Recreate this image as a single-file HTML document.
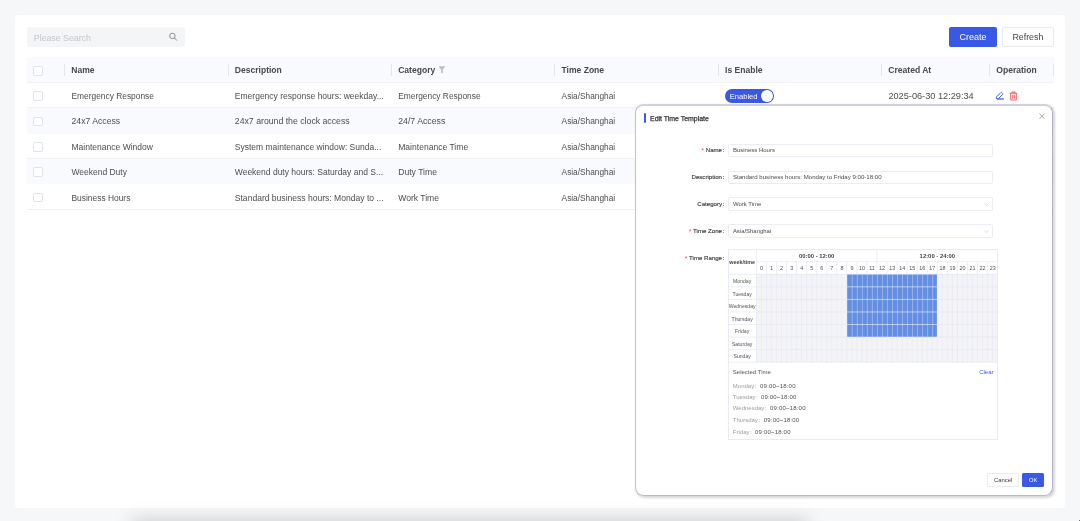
<!DOCTYPE html>
<html><head><meta charset="utf-8"><style>
*{box-sizing:border-box;margin:0;padding:0}
html,body{will-change:transform;width:1080px;height:521px;overflow:hidden;background:#f6f7f9;font-family:"Liberation Sans",sans-serif;position:relative}
.abs{position:absolute}
.t{position:absolute;white-space:nowrap;line-height:normal}
.card{left:15.2px;top:15.2px;width:1050.2px;height:492.8px;background:#fff;border-radius:4px}
.search{left:26.7px;top:26.9px;width:158.6px;height:20px;background:#f4f5f7;border-radius:2px}
.btn{height:20px;border-radius:2px}
.create{left:949.1px;top:26.6px;width:47.9px;height:20.4px;background:#3958e5}
.refresh{left:1002.2px;top:26.6px;width:51.4px;height:20.4px;background:#fff;border:1px solid #e9ebef}
.thead{left:27px;top:57px;width:1026.7px;height:25.5px;background:#f9fafd;border-bottom:1px solid #f0f1f4}
.sep{position:absolute;top:63.7px;width:1px;height:12px;background:#e4e6ec}
.row{position:absolute;left:27px;width:1027px;border-bottom:1px solid #f0f1f4}
.row.alt{background:#f9fafd;border-bottom:none}
.cb{position:absolute;left:33.4px;width:9.9px;height:9.9px;border:1px solid #e0e2e8;border-radius:2px;background:#fff}
.modal{position:absolute;left:634.8px;top:103.9px;width:418.4px;height:392.1px;background:#fff;border:1.3px solid #c2c4d3;border-top:2px solid #d0d2db;border-right-color:#b3b5c7;border-bottom-color:#b8bacb;border-radius:8.5px;box-shadow:1.5px 1.5px 2.5px rgba(0,0,0,.16)}
.mbar{position:absolute;left:643.8px;top:113px;width:2.1px;height:10px;background:#3d5af1;border-radius:1px}
.finp{position:absolute;left:727.6px;width:265.8px;height:13.4px;border:0.8px solid #ebedf2;border-radius:1.5px;background:#fff}
.lab{color:#3a3a3a;-webkit-text-stroke:0.14px #3a3a3a}
.tc{position:absolute;text-align:center;white-space:nowrap}
.mbtn{position:absolute;top:473.1px;height:13.6px;border-radius:1.5px}
.cancel{left:987.2px;width:31.6px;border:0.8px solid #eaecf0;background:#fff}
.ok{left:1022.2px;width:21.8px;background:#3958e5}
</style></head><body>
<div class="abs card"></div>
<div class="abs search"></div>
<div class="t " style="left:33.70px;top:32.54px;font-size:8.8px;color:#c3c6cc;">Please Search</div>
<svg class="abs" style="left:168px;top:32px" width="10" height="10" viewBox="0 0 10 10"><circle cx="4.4" cy="3.9" r="2.7" fill="none" stroke="#777a82" stroke-width="0.85"/><line x1="6.4" y1="5.9" x2="8.9" y2="8.5" stroke="#777a82" stroke-width="0.95"/></svg>
<div class="abs btn create"></div>
<div class="abs btn refresh"></div>
<div class="t " style="left:959.60px;top:31.86px;font-size:9px;color:#fff;">Create</div>
<div class="t " style="left:1012.40px;top:31.99px;font-size:8.85px;color:#444;">Refresh</div>
<div class="abs thead"></div>
<div class="cb" style="top:66px"></div>
<div class="sep" style="left:63.900000000000006px"></div>
<div class="sep" style="left:227.8px"></div>
<div class="sep" style="left:391.2px"></div>
<div class="sep" style="left:554.3px"></div>
<div class="sep" style="left:717.8px"></div>
<div class="sep" style="left:881.2px"></div>
<div class="sep" style="left:989.0px"></div>
<div class="sep" style="left:1052.7px"></div>
<div class="t " style="left:71.30px;top:65.26px;font-size:8.55px;color:#484848;font-weight:bold;">Name</div>
<div class="t " style="left:234.80px;top:65.26px;font-size:8.55px;color:#484848;font-weight:bold;">Description</div>
<div class="t " style="left:398.20px;top:65.26px;font-size:8.55px;color:#484848;font-weight:bold;">Category</div>
<div class="t " style="left:561.50px;top:65.26px;font-size:8.55px;color:#484848;font-weight:bold;">Time Zone</div>
<div class="t " style="left:725.10px;top:65.26px;font-size:8.55px;color:#484848;font-weight:bold;">Is Enable</div>
<div class="t " style="left:888.30px;top:65.26px;font-size:8.55px;color:#484848;font-weight:bold;">Created At</div>
<div class="t " style="left:996.30px;top:65.26px;font-size:8.55px;color:#484848;font-weight:bold;">Operation</div>
<svg class="abs" style="left:438px;top:66px" width="8" height="8" viewBox="0 0 8 8"><path d="M0.5 0.3H7.4L4.8 3.4V7.5L3.1 6.6V3.4Z" fill="#b9bcc5"/></svg>
<div class="row" style="top:82.5px;height:25.299999999999997px"></div>
<div class="row alt" style="top:107.8px;height:25.799999999999997px"></div>
<div class="row" style="top:133.6px;height:25.5px"></div>
<div class="row alt" style="top:159.1px;height:25.200000000000017px"></div>
<div class="row" style="top:184.3px;height:25.599999999999994px"></div>
<div class="cb" style="top:91.2px"></div>
<div class="cb" style="top:116.6px"></div>
<div class="cb" style="top:141.9px"></div>
<div class="cb" style="top:167.3px"></div>
<div class="cb" style="top:192.6px"></div>
<div class="t " style="left:71.50px;top:91.40px;font-size:8.4px;color:#4d4d4d;">Emergency Response</div>
<div class="t " style="left:234.80px;top:91.29px;font-size:8.52px;color:#4d4d4d;">Emergency response hours: weekday...</div>
<div class="t " style="left:398.20px;top:91.40px;font-size:8.4px;color:#4d4d4d;">Emergency Response</div>
<div class="t " style="left:561.60px;top:91.49px;font-size:8.3px;color:#4d4d4d;">Asia/Shanghai</div>
<div class="t " style="left:71.50px;top:116.16px;font-size:8.66px;color:#4d4d4d;">24x7 Access</div>
<div class="t " style="left:234.80px;top:116.11px;font-size:8.72px;color:#4d4d4d;">24x7 around the clock access</div>
<div class="t " style="left:398.20px;top:116.09px;font-size:8.74px;color:#4d4d4d;">24/7 Access</div>
<div class="t " style="left:561.60px;top:116.49px;font-size:8.3px;color:#4d4d4d;">Asia/Shanghai</div>
<div class="t " style="left:71.50px;top:141.78px;font-size:8.53px;color:#4d4d4d;">Maintenance Window</div>
<div class="t " style="left:234.80px;top:141.81px;font-size:8.5px;color:#4d4d4d;">System maintenance window: Sunda...</div>
<div class="t " style="left:398.20px;top:141.74px;font-size:8.57px;color:#4d4d4d;">Maintenance Time</div>
<div class="t " style="left:561.60px;top:141.99px;font-size:8.3px;color:#4d4d4d;">Asia/Shanghai</div>
<div class="t " style="left:71.50px;top:167.33px;font-size:8.47px;color:#4d4d4d;">Weekend Duty</div>
<div class="t " style="left:234.80px;top:167.31px;font-size:8.5px;color:#4d4d4d;">Weekend duty hours: Saturday and S...</div>
<div class="t " style="left:398.20px;top:167.18px;font-size:8.64px;color:#4d4d4d;">Duty Time</div>
<div class="t " style="left:561.60px;top:167.49px;font-size:8.3px;color:#4d4d4d;">Asia/Shanghai</div>
<div class="t " style="left:71.50px;top:192.89px;font-size:8.41px;color:#4d4d4d;">Business Hours</div>
<div class="t " style="left:234.80px;top:192.76px;font-size:8.55px;color:#4d4d4d;">Standard business hours: Monday to ...</div>
<div class="t " style="left:398.20px;top:192.73px;font-size:8.59px;color:#4d4d4d;">Work Time</div>
<div class="t " style="left:561.60px;top:192.99px;font-size:8.3px;color:#4d4d4d;">Asia/Shanghai</div>
<div class="t " style="left:888.40px;top:90.87px;font-size:9.2px;color:#4d4d4d;">2025-06-30 12:29:34</div>
<div class="abs" style="left:724.6px;top:88.9px;width:49.2px;height:14px;border-radius:7px;background:#3958e5"></div>
<div class="t " style="left:729.70px;top:92.12px;font-size:7.6px;color:#fff;">Enabled</div>
<div class="abs" style="left:761.2px;top:90px;width:11.8px;height:11.8px;border-radius:50%;background:#fff"></div>
<svg class="abs" style="left:995px;top:91px" width="10" height="10" viewBox="0 0 10 10"><path d="M1.4 6.0L5.9 1.5Q6.3 1.1 6.7 1.5L7.7 2.5Q8.1 2.9 7.7 3.3L3.2 7.8H1.4Z" fill="none" stroke="#4162e8" stroke-width="1" stroke-linejoin="round"/><line x1="2.2" y1="8.0" x2="8.9" y2="8.0" stroke="#4162e8" stroke-width="1.3"/></svg>
<svg class="abs" style="left:1009px;top:91px" width="10" height="10" viewBox="0 0 10 10"><path d="M0.7 2.3H8.3M3.1 2.3V1H5.9V2.3M1.7 2.8V8.6Q1.7 9 2.1 9H6.9Q7.3 9 7.3 8.6V2.8M3.7 3.8V7.8M5.3 3.8V7.8" fill="none" stroke="#ee6464" stroke-width="1.05"/></svg>
<div class="abs" style="left:132px;top:520px;width:676px;height:40px;background:rgba(0,0,0,.17);filter:blur(9px)"></div>
<div class="modal"></div>
<div class="mbar"></div>
<div class="t " style="left:650.00px;top:115.11px;font-size:6.95px;color:#333;-webkit-text-stroke:0.25px #333;">Edit Time Template</div>
<svg class="abs" style="left:1038.5px;top:112.5px" width="6.5" height="6.5" viewBox="0 0 6.5 6.5"><path d="M0.5 0.6L5.4 5.9M5.4 0.6L0.5 5.9" stroke="#8a8d94" stroke-width="0.75" fill="none"/></svg>
<div class="finp" style="top:143.5px"></div>
<div class="t lab" style="right:355.70000000000005px;top:146.38px;font-size:6.1px"><span style=color:#f25555;font-size:7px;line-height:0;-webkit-text-stroke:0;position:relative;top:0.9px>*</span> Name<span style="margin-left:0.6px">:</span></div>
<div class="t " style="left:732.90px;top:147.27px;font-size:6px;color:#4a4a4a;">Business Hours</div>
<div class="finp" style="top:170.5px"></div>
<div class="t lab" style="right:355.70000000000005px;top:173.38px;font-size:6.1px">Description<span style="margin-left:0.6px">:</span></div>
<div class="t " style="left:732.90px;top:172.98px;font-size:6.1px;color:#4a4a4a;">Standard business hours: Monday to Friday 9:00-18:00</div>
<div class="finp" style="top:197.4px"></div>
<div class="t lab" style="right:355.70000000000005px;top:200.28px;font-size:6.1px">Category<span style="margin-left:0.6px">:</span></div>
<div class="t " style="left:732.90px;top:201.17px;font-size:6px;color:#4a4a4a;">Work Time</div>
<svg class="abs" style="left:983.5px;top:202.6px" width="5" height="3" viewBox="0 0 5 3"><path d="M0.3 0.3L2.5 2.5L4.7 0.3" stroke="#c4c7cd" stroke-width="0.6" fill="none"/></svg>
<div class="finp" style="top:224.3px"></div>
<div class="t lab" style="right:355.70000000000005px;top:227.18px;font-size:6.1px"><span style=color:#f25555;font-size:7px;line-height:0;-webkit-text-stroke:0;position:relative;top:0.9px>*</span> Time Zone<span style="margin-left:0.6px">:</span></div>
<div class="t " style="left:732.90px;top:228.12px;font-size:5.95px;color:#4a4a4a;">Asia/Shanghai</div>
<svg class="abs" style="left:983.5px;top:229.5px" width="5" height="3" viewBox="0 0 5 3"><path d="M0.3 0.3L2.5 2.5L4.7 0.3" stroke="#c4c7cd" stroke-width="0.6" fill="none"/></svg>
<div class="t lab" style="right:355.70000000000005px;top:254.28px;font-size:6.1px"><span style="color:#f25555;font-size:7px;line-height:0;-webkit-text-stroke:0;position:relative;top:0.9px">*</span> Time Range<span style="margin-left:0.6px">:</span></div>
<div class="abs" style="left:727.9px;top:249.4px;width:269.70000000000005px;height:190.29999999999998px;border:1px solid #e8eaf5;background:#fff"></div>
<div class="abs" style="left:756.4px;top:274.3px;width:240.20000000000005px;height:87.89999999999998px;background:#f4f4f6"></div>
<div class="abs" style="left:846.85px;top:274.3px;width:90.45000000000002px;height:62.78571428571426px;background:#648ee2"></div>
<svg class="abs" style="left:0;top:0" width="1080" height="521" viewBox="0 0 1080 521"><line x1="756.4" y1="261.7" x2="997.6" y2="261.7" stroke="#e3e6f5" stroke-width="0.7"/><line x1="727.9" y1="274.3" x2="997.6" y2="274.3" stroke="#e3e6f5" stroke-width="0.7"/><line x1="727.9" y1="286.8571428571429" x2="997.6" y2="286.8571428571429" stroke="#e3e6f5" stroke-width="0.7"/><line x1="727.9" y1="299.4142857142857" x2="997.6" y2="299.4142857142857" stroke="#e3e6f5" stroke-width="0.7"/><line x1="727.9" y1="311.9714285714286" x2="997.6" y2="311.9714285714286" stroke="#e3e6f5" stroke-width="0.7"/><line x1="727.9" y1="324.5285714285714" x2="997.6" y2="324.5285714285714" stroke="#e3e6f5" stroke-width="0.7"/><line x1="727.9" y1="337.0857142857143" x2="997.6" y2="337.0857142857143" stroke="#e3e6f5" stroke-width="0.7"/><line x1="727.9" y1="349.6428571428571" x2="997.6" y2="349.6428571428571" stroke="#e3e6f5" stroke-width="0.7"/><line x1="727.9" y1="362.2" x2="997.6" y2="362.2" stroke="#e3e6f5" stroke-width="0.7"/><line x1="756.4" y1="249.4" x2="756.4" y2="362.2" stroke="#e3e6f5" stroke-width="0.7"/><line x1="877.0" y1="249.4" x2="877.0" y2="261.7" stroke="#e3e6f5" stroke-width="0.7"/><line x1="766.4499999999999" y1="261.7" x2="766.4499999999999" y2="274.3" stroke="#e3e6f5" stroke-width="0.7"/><line x1="776.5" y1="261.7" x2="776.5" y2="274.3" stroke="#e3e6f5" stroke-width="0.7"/><line x1="786.55" y1="261.7" x2="786.55" y2="274.3" stroke="#e3e6f5" stroke-width="0.7"/><line x1="796.6" y1="261.7" x2="796.6" y2="274.3" stroke="#e3e6f5" stroke-width="0.7"/><line x1="806.65" y1="261.7" x2="806.65" y2="274.3" stroke="#e3e6f5" stroke-width="0.7"/><line x1="816.7" y1="261.7" x2="816.7" y2="274.3" stroke="#e3e6f5" stroke-width="0.7"/><line x1="826.75" y1="261.7" x2="826.75" y2="274.3" stroke="#e3e6f5" stroke-width="0.7"/><line x1="836.8" y1="261.7" x2="836.8" y2="274.3" stroke="#e3e6f5" stroke-width="0.7"/><line x1="846.85" y1="261.7" x2="846.85" y2="274.3" stroke="#e3e6f5" stroke-width="0.7"/><line x1="856.9" y1="261.7" x2="856.9" y2="274.3" stroke="#e3e6f5" stroke-width="0.7"/><line x1="866.95" y1="261.7" x2="866.95" y2="274.3" stroke="#e3e6f5" stroke-width="0.7"/><line x1="877.0" y1="261.7" x2="877.0" y2="274.3" stroke="#e3e6f5" stroke-width="0.7"/><line x1="887.05" y1="261.7" x2="887.05" y2="274.3" stroke="#e3e6f5" stroke-width="0.7"/><line x1="897.1" y1="261.7" x2="897.1" y2="274.3" stroke="#e3e6f5" stroke-width="0.7"/><line x1="907.15" y1="261.7" x2="907.15" y2="274.3" stroke="#e3e6f5" stroke-width="0.7"/><line x1="917.2" y1="261.7" x2="917.2" y2="274.3" stroke="#e3e6f5" stroke-width="0.7"/><line x1="927.25" y1="261.7" x2="927.25" y2="274.3" stroke="#e3e6f5" stroke-width="0.7"/><line x1="937.3" y1="261.7" x2="937.3" y2="274.3" stroke="#e3e6f5" stroke-width="0.7"/><line x1="947.35" y1="261.7" x2="947.35" y2="274.3" stroke="#e3e6f5" stroke-width="0.7"/><line x1="957.4000000000001" y1="261.7" x2="957.4000000000001" y2="274.3" stroke="#e3e6f5" stroke-width="0.7"/><line x1="967.45" y1="261.7" x2="967.45" y2="274.3" stroke="#e3e6f5" stroke-width="0.7"/><line x1="977.5" y1="261.7" x2="977.5" y2="274.3" stroke="#e3e6f5" stroke-width="0.7"/><line x1="987.5500000000001" y1="261.7" x2="987.5500000000001" y2="274.3" stroke="#e3e6f5" stroke-width="0.7"/><line x1="761.425" y1="274.3" x2="761.425" y2="362.2" stroke="#e3e6f5" stroke-width="0.55"/><line x1="766.4499999999999" y1="274.3" x2="766.4499999999999" y2="362.2" stroke="#e3e6f5" stroke-width="0.55"/><line x1="771.475" y1="274.3" x2="771.475" y2="362.2" stroke="#e3e6f5" stroke-width="0.55"/><line x1="776.5" y1="274.3" x2="776.5" y2="362.2" stroke="#e3e6f5" stroke-width="0.55"/><line x1="781.525" y1="274.3" x2="781.525" y2="362.2" stroke="#e3e6f5" stroke-width="0.55"/><line x1="786.55" y1="274.3" x2="786.55" y2="362.2" stroke="#e3e6f5" stroke-width="0.55"/><line x1="791.575" y1="274.3" x2="791.575" y2="362.2" stroke="#e3e6f5" stroke-width="0.55"/><line x1="796.6" y1="274.3" x2="796.6" y2="362.2" stroke="#e3e6f5" stroke-width="0.55"/><line x1="801.625" y1="274.3" x2="801.625" y2="362.2" stroke="#e3e6f5" stroke-width="0.55"/><line x1="806.65" y1="274.3" x2="806.65" y2="362.2" stroke="#e3e6f5" stroke-width="0.55"/><line x1="811.675" y1="274.3" x2="811.675" y2="362.2" stroke="#e3e6f5" stroke-width="0.55"/><line x1="816.7" y1="274.3" x2="816.7" y2="362.2" stroke="#e3e6f5" stroke-width="0.55"/><line x1="821.725" y1="274.3" x2="821.725" y2="362.2" stroke="#e3e6f5" stroke-width="0.55"/><line x1="826.75" y1="274.3" x2="826.75" y2="362.2" stroke="#e3e6f5" stroke-width="0.55"/><line x1="831.775" y1="274.3" x2="831.775" y2="362.2" stroke="#e3e6f5" stroke-width="0.55"/><line x1="836.8" y1="274.3" x2="836.8" y2="362.2" stroke="#e3e6f5" stroke-width="0.55"/><line x1="841.825" y1="274.3" x2="841.825" y2="362.2" stroke="#e3e6f5" stroke-width="0.55"/><line x1="846.85" y1="274.3" x2="846.85" y2="362.2" stroke="#e3e6f5" stroke-width="0.55"/><line x1="851.875" y1="337.0857142857143" x2="851.875" y2="362.2" stroke="#e3e6f5" stroke-width="0.55"/><line x1="852.275" y1="274.3" x2="852.275" y2="337.0857142857143" stroke="#fff" stroke-opacity="0.45" stroke-width="0.7"/><line x1="856.9" y1="337.0857142857143" x2="856.9" y2="362.2" stroke="#e3e6f5" stroke-width="0.55"/><line x1="857.3" y1="274.3" x2="857.3" y2="337.0857142857143" stroke="#fff" stroke-opacity="0.45" stroke-width="0.7"/><line x1="861.925" y1="337.0857142857143" x2="861.925" y2="362.2" stroke="#e3e6f5" stroke-width="0.55"/><line x1="862.3249999999999" y1="274.3" x2="862.3249999999999" y2="337.0857142857143" stroke="#fff" stroke-opacity="0.45" stroke-width="0.7"/><line x1="866.95" y1="337.0857142857143" x2="866.95" y2="362.2" stroke="#e3e6f5" stroke-width="0.55"/><line x1="867.35" y1="274.3" x2="867.35" y2="337.0857142857143" stroke="#fff" stroke-opacity="0.45" stroke-width="0.7"/><line x1="871.975" y1="337.0857142857143" x2="871.975" y2="362.2" stroke="#e3e6f5" stroke-width="0.55"/><line x1="872.375" y1="274.3" x2="872.375" y2="337.0857142857143" stroke="#fff" stroke-opacity="0.45" stroke-width="0.7"/><line x1="877.0" y1="337.0857142857143" x2="877.0" y2="362.2" stroke="#e3e6f5" stroke-width="0.55"/><line x1="877.4" y1="274.3" x2="877.4" y2="337.0857142857143" stroke="#fff" stroke-opacity="0.45" stroke-width="0.7"/><line x1="882.025" y1="337.0857142857143" x2="882.025" y2="362.2" stroke="#e3e6f5" stroke-width="0.55"/><line x1="882.425" y1="274.3" x2="882.425" y2="337.0857142857143" stroke="#fff" stroke-opacity="0.45" stroke-width="0.7"/><line x1="887.05" y1="337.0857142857143" x2="887.05" y2="362.2" stroke="#e3e6f5" stroke-width="0.55"/><line x1="887.4499999999999" y1="274.3" x2="887.4499999999999" y2="337.0857142857143" stroke="#fff" stroke-opacity="0.45" stroke-width="0.7"/><line x1="892.075" y1="337.0857142857143" x2="892.075" y2="362.2" stroke="#e3e6f5" stroke-width="0.55"/><line x1="892.475" y1="274.3" x2="892.475" y2="337.0857142857143" stroke="#fff" stroke-opacity="0.45" stroke-width="0.7"/><line x1="897.1" y1="337.0857142857143" x2="897.1" y2="362.2" stroke="#e3e6f5" stroke-width="0.55"/><line x1="897.5" y1="274.3" x2="897.5" y2="337.0857142857143" stroke="#fff" stroke-opacity="0.45" stroke-width="0.7"/><line x1="902.125" y1="337.0857142857143" x2="902.125" y2="362.2" stroke="#e3e6f5" stroke-width="0.55"/><line x1="902.525" y1="274.3" x2="902.525" y2="337.0857142857143" stroke="#fff" stroke-opacity="0.45" stroke-width="0.7"/><line x1="907.15" y1="337.0857142857143" x2="907.15" y2="362.2" stroke="#e3e6f5" stroke-width="0.55"/><line x1="907.55" y1="274.3" x2="907.55" y2="337.0857142857143" stroke="#fff" stroke-opacity="0.45" stroke-width="0.7"/><line x1="912.175" y1="337.0857142857143" x2="912.175" y2="362.2" stroke="#e3e6f5" stroke-width="0.55"/><line x1="912.5749999999999" y1="274.3" x2="912.5749999999999" y2="337.0857142857143" stroke="#fff" stroke-opacity="0.45" stroke-width="0.7"/><line x1="917.2" y1="337.0857142857143" x2="917.2" y2="362.2" stroke="#e3e6f5" stroke-width="0.55"/><line x1="917.6" y1="274.3" x2="917.6" y2="337.0857142857143" stroke="#fff" stroke-opacity="0.45" stroke-width="0.7"/><line x1="922.225" y1="337.0857142857143" x2="922.225" y2="362.2" stroke="#e3e6f5" stroke-width="0.55"/><line x1="922.625" y1="274.3" x2="922.625" y2="337.0857142857143" stroke="#fff" stroke-opacity="0.45" stroke-width="0.7"/><line x1="927.25" y1="337.0857142857143" x2="927.25" y2="362.2" stroke="#e3e6f5" stroke-width="0.55"/><line x1="927.65" y1="274.3" x2="927.65" y2="337.0857142857143" stroke="#fff" stroke-opacity="0.45" stroke-width="0.7"/><line x1="932.2750000000001" y1="337.0857142857143" x2="932.2750000000001" y2="362.2" stroke="#e3e6f5" stroke-width="0.55"/><line x1="932.6750000000001" y1="274.3" x2="932.6750000000001" y2="337.0857142857143" stroke="#fff" stroke-opacity="0.45" stroke-width="0.7"/><line x1="937.3" y1="274.3" x2="937.3" y2="362.2" stroke="#e3e6f5" stroke-width="0.55"/><line x1="942.325" y1="274.3" x2="942.325" y2="362.2" stroke="#e3e6f5" stroke-width="0.55"/><line x1="947.35" y1="274.3" x2="947.35" y2="362.2" stroke="#e3e6f5" stroke-width="0.55"/><line x1="952.375" y1="274.3" x2="952.375" y2="362.2" stroke="#e3e6f5" stroke-width="0.55"/><line x1="957.4000000000001" y1="274.3" x2="957.4000000000001" y2="362.2" stroke="#e3e6f5" stroke-width="0.55"/><line x1="962.4250000000001" y1="274.3" x2="962.4250000000001" y2="362.2" stroke="#e3e6f5" stroke-width="0.55"/><line x1="967.45" y1="274.3" x2="967.45" y2="362.2" stroke="#e3e6f5" stroke-width="0.55"/><line x1="972.475" y1="274.3" x2="972.475" y2="362.2" stroke="#e3e6f5" stroke-width="0.55"/><line x1="977.5" y1="274.3" x2="977.5" y2="362.2" stroke="#e3e6f5" stroke-width="0.55"/><line x1="982.5250000000001" y1="274.3" x2="982.5250000000001" y2="362.2" stroke="#e3e6f5" stroke-width="0.55"/><line x1="987.5500000000001" y1="274.3" x2="987.5500000000001" y2="362.2" stroke="#e3e6f5" stroke-width="0.55"/><line x1="992.575" y1="274.3" x2="992.575" y2="362.2" stroke="#e3e6f5" stroke-width="0.55"/></svg>
<div class="tc" style="left:727.90px;width:28.50px;top:259.01px;font-size:5.4px;color:#444;font-weight:bold;">week/time</div>
<div class="tc" style="left:756.40px;width:120.60px;top:252.66px;font-size:5.9px;color:#444;font-weight:bold;">00:00 - 12:00</div>
<div class="tc" style="left:877.00px;width:120.60px;top:252.66px;font-size:5.9px;color:#444;font-weight:bold;">12:00 - 24:00</div>
<div class="tc" style="left:756.50px;width:10.05px;top:265.11px;font-size:5.4px;color:#505050;">0</div>
<div class="tc" style="left:766.55px;width:10.05px;top:265.11px;font-size:5.4px;color:#505050;">1</div>
<div class="tc" style="left:776.60px;width:10.05px;top:265.11px;font-size:5.4px;color:#505050;">2</div>
<div class="tc" style="left:786.65px;width:10.05px;top:265.11px;font-size:5.4px;color:#505050;">3</div>
<div class="tc" style="left:796.70px;width:10.05px;top:265.11px;font-size:5.4px;color:#505050;">4</div>
<div class="tc" style="left:806.75px;width:10.05px;top:265.11px;font-size:5.4px;color:#505050;">5</div>
<div class="tc" style="left:816.80px;width:10.05px;top:265.11px;font-size:5.4px;color:#505050;">6</div>
<div class="tc" style="left:826.85px;width:10.05px;top:265.11px;font-size:5.4px;color:#505050;">7</div>
<div class="tc" style="left:836.90px;width:10.05px;top:265.11px;font-size:5.4px;color:#505050;">8</div>
<div class="tc" style="left:846.95px;width:10.05px;top:265.11px;font-size:5.4px;color:#505050;">9</div>
<div class="tc" style="left:857.00px;width:10.05px;top:265.11px;font-size:5.4px;color:#505050;">10</div>
<div class="tc" style="left:867.05px;width:10.05px;top:265.11px;font-size:5.4px;color:#505050;">11</div>
<div class="tc" style="left:877.10px;width:10.05px;top:265.11px;font-size:5.4px;color:#505050;">12</div>
<div class="tc" style="left:887.15px;width:10.05px;top:265.11px;font-size:5.4px;color:#505050;">13</div>
<div class="tc" style="left:897.20px;width:10.05px;top:265.11px;font-size:5.4px;color:#505050;">14</div>
<div class="tc" style="left:907.25px;width:10.05px;top:265.11px;font-size:5.4px;color:#505050;">15</div>
<div class="tc" style="left:917.30px;width:10.05px;top:265.11px;font-size:5.4px;color:#505050;">16</div>
<div class="tc" style="left:927.35px;width:10.05px;top:265.11px;font-size:5.4px;color:#505050;">17</div>
<div class="tc" style="left:937.40px;width:10.05px;top:265.11px;font-size:5.4px;color:#505050;">18</div>
<div class="tc" style="left:947.45px;width:10.05px;top:265.11px;font-size:5.4px;color:#505050;">19</div>
<div class="tc" style="left:957.50px;width:10.05px;top:265.11px;font-size:5.4px;color:#505050;">20</div>
<div class="tc" style="left:967.55px;width:10.05px;top:265.11px;font-size:5.4px;color:#505050;">21</div>
<div class="tc" style="left:977.60px;width:10.05px;top:265.11px;font-size:5.4px;color:#505050;">22</div>
<div class="tc" style="left:987.65px;width:10.05px;top:265.11px;font-size:5.4px;color:#505050;">23</div>
<div class="tc" style="left:727.90px;width:28.50px;top:277.98px;font-size:5.1px;color:#555;">Monday</div>
<div class="tc" style="left:727.90px;width:28.50px;top:290.54px;font-size:5.1px;color:#555;">Tuesday</div>
<div class="tc" style="left:727.90px;width:28.50px;top:303.10px;font-size:5.1px;color:#555;">Wednesday</div>
<div class="tc" style="left:727.90px;width:28.50px;top:315.66px;font-size:5.1px;color:#555;">Thursday</div>
<div class="tc" style="left:727.90px;width:28.50px;top:328.21px;font-size:5.1px;color:#555;">Friday</div>
<div class="tc" style="left:727.90px;width:28.50px;top:340.77px;font-size:5.1px;color:#555;">Saturday</div>
<div class="tc" style="left:727.90px;width:28.50px;top:353.33px;font-size:5.1px;color:#555;">Sunday</div>
<div class="t " style="left:732.80px;top:368.97px;font-size:6px;color:#555;">Selected Time</div>
<div class="t " style="left:979.20px;top:368.97px;font-size:6px;color:#3d5af1;">Clear</div>
<div class="t " style="left:732.80px;top:382.77px;font-size:6px;color:#505050;"><span style="color:#9c9c9c">Monday<span style="margin-left:0.7px">:</span></span><span style="position:absolute;left:27.30px;letter-spacing:0.185px">09:00~18:00</span></div>
<div class="t " style="left:732.80px;top:394.17px;font-size:6px;color:#505050;"><span style="color:#9c9c9c">Tuesday<span style="margin-left:0.7px">:</span></span><span style="position:absolute;left:28.10px;letter-spacing:0.185px">09:00~18:00</span></div>
<div class="t " style="left:732.80px;top:405.47px;font-size:6px;color:#505050;"><span style="color:#9c9c9c">Wednesday<span style="margin-left:0.7px">:</span></span><span style="position:absolute;left:37.30px;letter-spacing:0.185px">09:00~18:00</span></div>
<div class="t " style="left:732.80px;top:417.07px;font-size:6px;color:#505050;"><span style="color:#9c9c9c">Thursday<span style="margin-left:0.7px">:</span></span><span style="position:absolute;left:31.00px;letter-spacing:0.185px">09:00~18:00</span></div>
<div class="t " style="left:732.80px;top:428.77px;font-size:6px;color:#505050;"><span style="color:#9c9c9c">Friday<span style="margin-left:0.7px">:</span></span><span style="position:absolute;left:22.30px;letter-spacing:0.185px">09:00~18:00</span></div>
<div class="mbtn cancel"></div>
<div class="mbtn ok"></div>
<div class="t " style="left:994.00px;top:476.66px;font-size:5.9px;color:#3a3a3a;">Cancel</div>
<div class="t " style="left:1029.00px;top:476.84px;font-size:5.7px;color:#fff;">OK</div>
<div class="abs" style="left:1079px;top:520px;width:1px;height:1px;background:#777"></div>
</body></html>
